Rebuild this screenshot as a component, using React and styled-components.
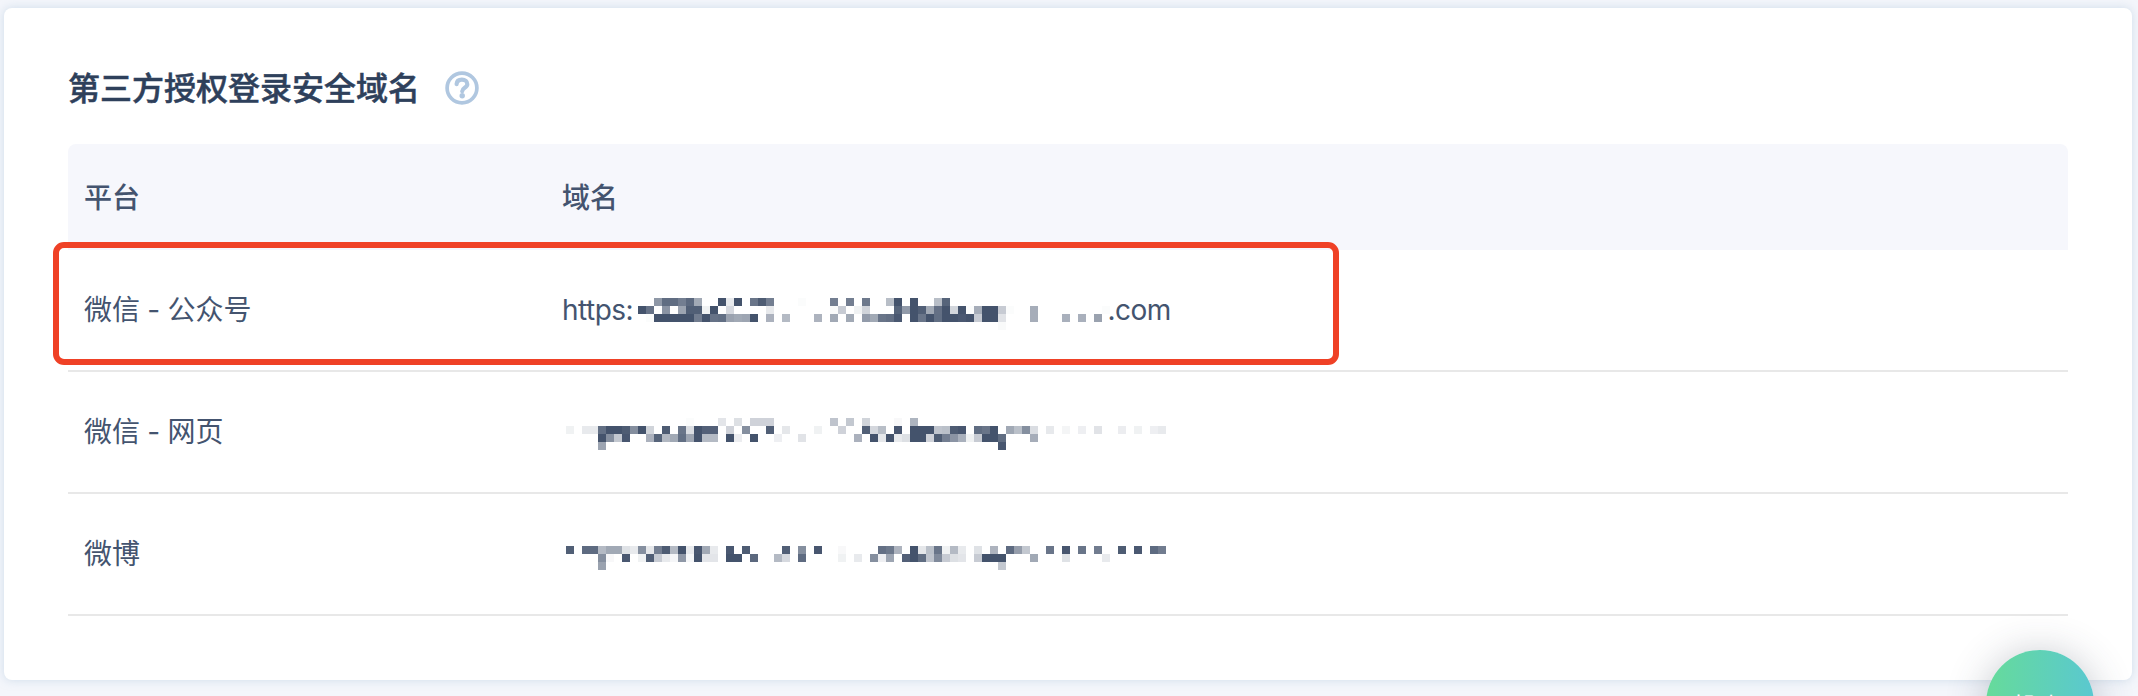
import React from "react";
import styled, { createGlobalStyle } from "styled-components";

const Global = createGlobalStyle`
  * { box-sizing: border-box; }
  html, body { margin: 0; background: #f4f6fb; }
  body {
    font-family: Inter, "Noto Sans CJK SC", sans-serif;
    color: #44546f;
  }
`;

const Page = styled.main`
  position: relative;
  height: 696px;
  padding: 8px 6px 16px 4px;
  overflow: hidden;
`;

const Card = styled.section`
  height: 672px;
  padding: 0 64px;
  background: #fff;
  border-radius: 8px;
  box-shadow: 0 0 10px rgba(170, 195, 220, 0.5);
`;

const TitleBar = styled.header`
  display: flex;
  align-items: center;
  gap: 25px;
  height: 136px;
  padding-top: 24px;
`;

const Title = styled.h2`
  margin: 0;
  padding-top: 2px;
  font-size: 32px;
  line-height: 48px;
  font-weight: 500;
  color: #2e405b;
  white-space: nowrap;
  -webkit-text-stroke: 0.5px #2e405b;
`;

const HelpIcon = styled.svg`
  display: block;
  width: 34px;
  height: 34px;
`;

const Row = styled.div`
  position: relative;
  display: grid;
  grid-template-columns: 478px 1fr;
  align-items: center;
  height: 122px;
  padding: 0 16px;
  border-bottom: 2px solid #e8e8e8;
  font-size: 28px;
  line-height: 40px;
  word-spacing: -0.6px;
`;

const HeadRow = styled(Row)`
  height: 106px;
  padding-top: 2px;
  border-bottom: 0;
  border-radius: 8px 8px 0 0;
  background: #f6f7fc;
  font-weight: 500;
`;

const Domain = styled.div`
  display: flex;
  align-items: center;
`;

const Scheme = styled.span`
  flex: none;
  width: 76px;
  letter-spacing: -0.5px;
`;

const Suffix = styled.span`
  margin-left: -2.5px;
  letter-spacing: -0.5px;
`;

const Mosaic = styled.svg`
  display: block;
  flex: none;
  margin-left: ${(p) => p.$left}px;
  margin-top: ${(p) => p.$top}px;
`;

const Highlight = styled.div`
  position: absolute;
  left: -15px;
  top: -8px;
  width: 1286px;
  height: 123px;
  border: 6px solid #ef4126;
  border-radius: 11px;
`;

const HelpButton = styled.button`
  position: absolute;
  left: 1986px;
  top: 650px;
  width: 108px;
  height: 108px;
  padding: 2px 10px 0 0;
  border: 0;
  border-radius: 50%;
  background: linear-gradient(90deg, #66db9a, #5ac8d0);
  box-shadow: 0 4px 40px rgba(50, 60, 80, 0.3);
  color: #fff;
  font: 400 24px/28px "Noto Sans CJK SC", sans-serif;
`;

const CELL = 8;

/* Each line lists "column:opacity" pairs of the masked address. */
const MASKS = {
  official: [
    "11:60 12:85 13:85 14:75 15:87 16:50 19:100 20:12 21:100 23:80 24:95 25:75 29:2 33:75 35:75 37:78 40:38 41:100 43:100 46:38 47:90",
    "9:100 10:82 12:62 14:53 15:93 16:93 17:8 18:100 20:22 25:13 33:3 34:30 36:8 37:25 41:90 42:58 43:100 44:93 45:50 46:83 47:100 48:24 49:100 50:2 51:48 52:100 53:100 54:30 55:2 58:48 67:2",
    "10:2 11:100 12:100 13:100 14:100 15:100 16:76 17:100 18:82 19:84 20:54 21:50 22:52 23:100 25:45 27:40 31:44 33:50 35:50 37:58 38:50 39:80 40:83 41:97 43:100 44:80 45:100 46:84 47:100 48:100 49:97 50:100 51:30 52:100 53:100 54:16 58:48 62:46 64:46 66:54",
    "54:3",
  ],
  web: [
    "15:2 19:15 21:18 23:26 24:26 25:26 33:34 35:32 37:25 41:4 43:43",
    "0:8 2:12 3:12 4:84 5:100 6:100 7:95 8:66 9:100 10:25 12:95 14:80 15:20 16:100 17:92 18:92 20:26 22:65 25:93 27:14 31:8 34:26 37:93 38:23 39:38 41:98 43:100 44:100 45:100 46:34 47:37 48:95 49:98 51:85 52:80 53:100 55:50 56:37 57:65 58:20 60:13 62:6 64:9 66:16 69:10 71:8 73:9 74:12",
    "4:100 5:65 6:32 7:98 10:45 11:90 12:42 13:50 14:84 15:52 16:100 17:40 18:40 20:100 21:10 23:100 26:9 29:16 36:45 38:100 39:14 40:100 41:12 42:18 43:100 44:100 45:26 46:95 47:75 48:62 49:46 50:8 51:30 52:100 53:100 54:85 58:48",
    "4:52 54:98",
  ],
  weibo: [
    "0:93 2:86 3:86 4:40 5:50 6:50 7:17 8:12 9:65 10:14 11:75 12:95 13:40 14:100 15:12 16:98 17:50 18:12 20:97 22:95 27:93 29:65 31:98 34:4 39:83 40:78 41:44 43:100 44:14 45:37 46:80 47:8 48:40 49:12 51:17 53:44 55:86 56:57 57:32 60:80 62:98 64:80 66:76 69:95 71:97 73:86 74:76",
    "4:65 5:4 7:97 9:8 10:93 11:30 12:12 13:5 14:60 15:5 16:100 17:15 18:15 20:100 21:100 23:88 26:40 27:22 29:86 34:8 36:12 38:65 39:9 40:52 42:92 43:100 44:85 45:34 46:68 47:30 48:18 49:15 51:30 52:100 53:100 54:100 58:50 62:17 67:12",
    "4:54 54:32",
  ],
};

function MaskedAddress({ lines, columns = 75, start = 0, left, top }) {
  const width = (columns - start) * CELL;
  const height = lines.length * CELL;
  return (
    <Mosaic
      $left={left}
      $top={top}
      width={width}
      height={height}
      viewBox={`${start * CELL} 0 ${width} ${height}`}
      fill="#44536c"
      shapeRendering="crispEdges"
    >
      {lines.flatMap((line, y) =>
        line.split(" ").map((pair) => {
          const [x, alpha] = pair.split(":").map(Number);
          return (
            <rect
              key={`${x}-${y}`}
              x={x * CELL}
              y={y * CELL}
              width={CELL}
              height={CELL}
              fillOpacity={alpha / 100}
            />
          );
        })
      )}
    </Mosaic>
  );
}

export default function App() {
  return (
    <Page>
      <Global />
      <Card>
        <TitleBar>
          <Title>第三方授权登录安全域名</Title>
          <HelpIcon viewBox="0 0 34 34" fill="none" stroke="#b0c7e0">
            <circle cx="17" cy="17" r="14.9" strokeWidth="3.7" />
            <path
              d="M11.6 13.2c.2-2.900 2.300-4.500 5.300-4.500 3.200 0 5.400 1.700 5.400 4.500 0 3.600-5.100 3.500-5.100 7"
              strokeWidth="4.2"
              strokeLinecap="round"
            />
            <circle cx="17.200" cy="24.700" r="2.700" fill="#b0c7e0" stroke="none" />
          </HelpIcon>
        </TitleBar>
        <HeadRow>
          <span>平台</span>
          <span>域名</span>
        </HeadRow>
        <Row>
          <span>微信 - 公众号</span>
          <Domain>
            <Scheme>https:</Scheme>
            <MaskedAddress lines={MASKS.official} start={9} columns={68} left={0} top={8} />
            <Suffix>.com</Suffix>
          </Domain>
          <Highlight />
        </Row>
        <Row>
          <span>微信 - 网页</span>
          <Domain>
            <MaskedAddress lines={MASKS.web} left={4} top={4} />
          </Domain>
        </Row>
        <Row>
          <span>微博</span>
          <Domain>
            <MaskedAddress lines={MASKS.weibo} left={4} top={8} />
          </Domain>
        </Row>
      </Card>
      <HelpButton>帮助</HelpButton>
    </Page>
  );
}
